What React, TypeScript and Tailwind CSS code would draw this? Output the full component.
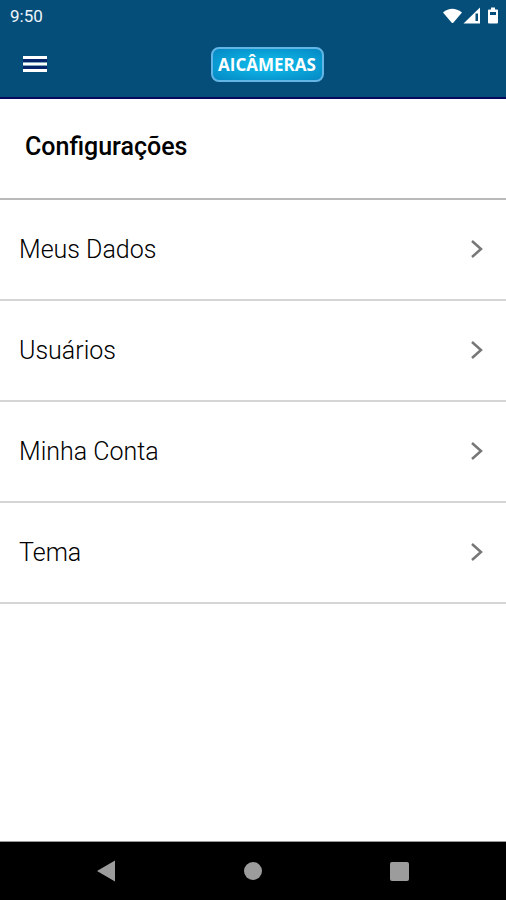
const items = ["Meus Dados", "Usuários", "Minha Conta", "Tema"];

function StatusIcons() {
  return (
    <svg width="58" height="20" viewBox="0 0 58 20" fill="#fff" aria-hidden="true">
      <path d="M1 6.500Q10 -1 20 6.500L11.500 16.500Q10.500 17.500 9.500 16.500Z" />
      <path fillRule="evenodd" d="M38 1.500V17.500H21.500ZM33.500 7.500V15H36V7.500Z" />
      <path fillRule="evenodd" d="M49 1.500H53V3.500H55Q56 3.500 56 4.500V16.500Q56 17.500 55 17.500H47Q46 17.500 46 16.500V4.500Q46 3.500 47 3.500H49ZM48 6V9H54V6Z" />
    </svg>
  );
}

export default function App() {
  return (
    <div className="flex min-h-screen flex-col bg-white font-['Roboto',sans-serif] text-black">
      <header className="border-b-2 border-[#07095f] bg-[#044e79]">
        <div className="flex h-8 items-center justify-between pl-[10px] pr-[6px]">
          <time className="text-[17px] leading-8 text-[#eef5fb]">9:50</time>
          <StatusIcons />
        </div>
        <div className="grid h-[65px] grid-cols-[1fr_auto_1fr] items-center px-[22px] pb-px">
          <button type="button" aria-label="Abrir menu" className="w-fit">
            <svg width="25" height="18" viewBox="0 0 25 18" aria-hidden="true">
              <path d="M1 5.500H25M1 12.500H25" stroke="#07095f" strokeWidth="3" opacity=".6" />
              <path d="M1 2.500H25M1 9H25M1 15.500H25" stroke="#fff" strokeWidth="3" />
            </svg>
          </button>
          <div className="ml-7 flex h-[35px] w-[113px] items-center justify-center rounded-lg border-2 border-[#62b5e4] bg-radial from-[#12c0ee] to-[#0688c4] pt-[2px] font-['Open_Sans',sans-serif] text-[17px] font-bold text-white">
            AICÂMERAS
          </div>
        </div>
      </header>
      <main className="flex-1">
        <h1 className="flex h-[101px] items-center border-b-2 border-[#b9b9b9] px-[25px] pb-1 text-[25px] font-medium">
          Configurações
        </h1>
        <ul>
          {items.map((item) => (
            <li key={item}>
              <button
                type="button"
                className="flex h-[101px] w-full items-center justify-between border-b-2 border-[#d5d5d5] pl-[19px] pr-[22px] pt-px text-left text-[25px] font-light text-black"
              >
                {item}
                <svg width="14" height="20" viewBox="0 0 14 20" fill="none" aria-hidden="true">
                  <path d="M2 1L11 9L2 17" stroke="#777" strokeWidth="2.500" />
                </svg>
              </button>
            </li>
          ))}
        </ul>
      </main>
      <nav className="flex h-[59px] justify-center border-t border-[#999] bg-black">
        <button type="button" aria-label="Voltar" className="flex w-[146px] items-center justify-center">
          <svg width="20" height="22" viewBox="0 0 20 22" aria-hidden="true">
            <path d="M0 11L18 0.500V21.500Z" fill="#9c9c9c" />
          </svg>
        </button>
        <button type="button" aria-label="Início" className="flex w-[146px] items-center justify-center">
          <span className="size-[18px] rounded-full bg-[#9c9c9c]" />
        </button>
        <button type="button" aria-label="Recentes" className="flex w-[146px] items-center justify-center">
          <span className="size-[19px] rounded-xs bg-[#9c9c9c]" />
        </button>
      </nav>
    </div>
  );
}
